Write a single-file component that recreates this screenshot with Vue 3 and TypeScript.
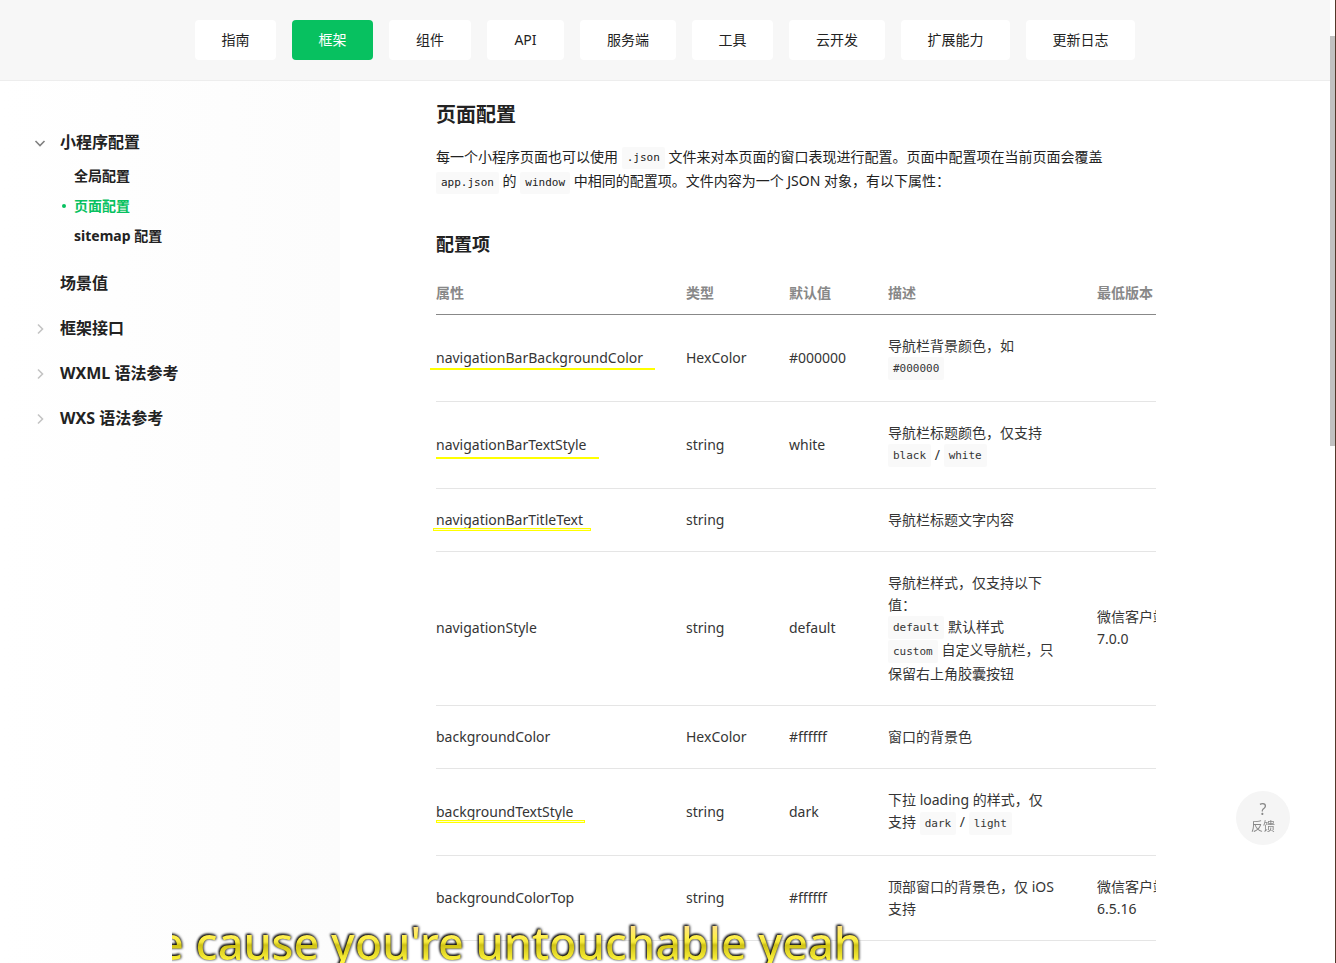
<script setup lang="ts">
interface Tab {
  label: string
  active?: boolean
}

interface Part {
  text: string
  code?: boolean
  breakAfter?: boolean
}

interface Row {
  name: string
  mark?: string
  type: string
  initial: string
  desc: Part[]
  version?: string
}

interface Section {
  label: string
  state: 'open' | 'closed' | 'leaf'
  children?: { label: string; active?: boolean }[]
}

const tabs: Tab[] = [
  { label: '指南' },
  { label: '框架', active: true },
  { label: '组件' },
  { label: 'API' },
  { label: '服务端' },
  { label: '工具' },
  { label: '云开发' },
  { label: '扩展能力' },
  { label: '更新日志' },
]

const sections: Section[] = [
  {
    label: '小程序配置',
    state: 'open',
    children: [
      { label: '全局配置' },
      { label: '页面配置', active: true },
      { label: 'sitemap 配置' },
    ],
  },
  { label: '场景值', state: 'leaf' },
  { label: '框架接口', state: 'closed' },
  { label: 'WXML 语法参考', state: 'closed' },
  { label: 'WXS 语法参考', state: 'closed' },
]

const columns: string[] = ['属性', '类型', '默认值', '描述', '最低版本']

const rows: Row[] = [
  {
    name: 'navigationBarBackgroundColor',
    mark: 'wide',
    type: 'HexColor',
    initial: '#000000',
    desc: [{ text: '导航栏背景颜色，如 ' }, { text: '#000000', code: true }],
  },
  {
    name: 'navigationBarTextStyle',
    mark: 'low',
    type: 'string',
    initial: 'white',
    desc: [
      { text: '导航栏标题颜色，仅支持 ' },
      { text: 'black', code: true },
      { text: ' / ' },
      { text: 'white', code: true },
    ],
  },
  {
    name: 'navigationBarTitleText',
    mark: 'boxed outset',
    type: 'string',
    initial: '',
    desc: [{ text: '导航栏标题文字内容' }],
  },
  {
    name: 'navigationStyle',
    type: 'string',
    initial: 'default',
    desc: [
      { text: '导航栏样式，仅支持以下值：', breakAfter: true },
      { text: 'default', code: true },
      { text: ' 默认样式', breakAfter: true },
      { text: 'custom', code: true },
      { text: ' 自定义导航栏，只保留右上角胶囊按钮' },
    ],
    version: '微信客户端 7.0.0',
  },
  {
    name: 'backgroundColor',
    type: 'HexColor',
    initial: '#ffffff',
    desc: [{ text: '窗口的背景色' }],
  },
  {
    name: 'backgroundTextStyle',
    mark: 'boxed',
    type: 'string',
    initial: 'dark',
    desc: [
      { text: '下拉 loading 的样式，仅支持 ' },
      { text: 'dark', code: true },
      { text: ' / ' },
      { text: 'light', code: true },
    ],
  },
  {
    name: 'backgroundColorTop',
    type: 'string',
    initial: '#ffffff',
    desc: [{ text: '顶部窗口的背景色，仅 iOS 支持' }],
    version: '微信客户端 6.5.16',
  },
]
</script>

<template>
  <div class="page">
    <header class="topbar">
      <nav class="tabs">
        <a
          v-for="tab in tabs"
          :key="tab.label"
          href="#"
          class="tab"
          :class="{ active: tab.active }"
        >{{ tab.label }}</a>
      </nav>
    </header>

    <div class="body">
      <aside class="sidebar">
        <ul class="sections">
          <li v-for="section in sections" :key="section.label">
            <a href="#" class="section">
              <svg v-if="section.state === 'open'" class="arrow open" viewBox="0 0 12 12">
                <path d="M1.5 4 6 8.5 10.5 4" />
              </svg>
              <svg v-else-if="section.state === 'closed'" class="arrow" viewBox="0 0 12 12">
                <path d="M4 1.5 8.5 6 4 10.5" />
              </svg>
              <span v-else class="arrow"></span>
              {{ section.label }}
            </a>
            <ul v-if="section.children" class="children">
              <li v-for="child in section.children" :key="child.label">
                <a href="#" class="child" :class="{ active: child.active }">
                  <span class="dot"></span>{{ child.label }}
                </a>
              </li>
            </ul>
          </li>
        </ul>
      </aside>

      <main class="content">
        <h1>页面配置</h1>
        <p>
          每一个小程序页面也可以使用 <code>.json</code> 文件来对本页面的窗口表现进行配置。页面中配置项在当前页面会覆盖
          <code>app.json</code> 的 <code>window</code> 中相同的配置项。文件内容为一个 JSON 对象，有以下属性：
        </p>
        <h2>配置项</h2>
        <div class="table-wrap">
          <table>
            <colgroup>
              <col class="c-name" />
              <col class="c-type" />
              <col class="c-initial" />
              <col class="c-desc" />
              <col class="c-version" />
            </colgroup>
            <thead>
              <tr>
                <th v-for="column in columns" :key="column" scope="col">{{ column }}</th>
              </tr>
            </thead>
            <tbody>
              <tr v-for="row in rows" :key="row.name">
                <td><span class="name" :class="row.mark ? ['marked', row.mark] : []">{{ row.name }}</span></td>
                <td>{{ row.type }}</td>
                <td>{{ row.initial }}</td>
                <td><template v-for="(part, i) in row.desc" :key="i"><code v-if="part.code">{{ part.text }}</code><template v-else>{{ part.text }}</template><br v-if="part.breakAfter" /></template></td>
                <td>{{ row.version }}</td>
              </tr>
            </tbody>
          </table>
        </div>
      </main>
    </div>

    <button type="button" class="feedback">
      <span class="question">?</span>
      <span>反馈</span>
    </button>

    <div class="scrollbar"><div class="thumb"></div></div>

    <div class="lyrics"><span>e cause you're untouchable yeah</span></div>
  </div>
</template>

<style>
html,
body {
  margin: 0;
  overflow: hidden;
}
</style>

<style scoped>
.page {
  height: 100vh;
  overflow: hidden;
  background: #fff;
  color: #222;
  font-family: "Noto Sans", "Noto Sans CJK SC", sans-serif;
  font-size: 14px;
  line-height: 22px;
}

a {
  color: inherit;
  text-decoration: none;
}

ul {
  list-style: none;
  margin: 0;
  padding: 0;
}

.topbar {
  padding: 20px 6px 20px 0;
  background: #f7f7f7;
  border-bottom: 1px solid #ededed;
}

.tabs {
  display: grid;
  grid-template-columns: 81px 81px 82px 77px 96px 81px 96px 109px 109px;
  gap: 16px;
  justify-content: center;
}

.tab {
  background: #fff;
  border-radius: 4px;
  text-align: center;
  line-height: 40px;
}

.tab.active {
  background: #07c160;
  color: #fff;
}

.body {
  display: flex;
  min-height: 100%;
}

.sidebar {
  box-sizing: border-box;
  flex: 0 0 340px;
  padding: 39px 0 0 34px;
  background: linear-gradient(90deg, #fff, #fcfcfc);
}

.section {
  display: flex;
  align-items: center;
  gap: 14px;
  font-size: 16px;
  font-weight: 700;
  line-height: 45px;
}

.arrow {
  width: 12px;
  height: 12px;
  fill: none;
  stroke: #c4c4c4;
  stroke-width: 1.6;
}

.arrow.open {
  stroke: #808080;
}

.children {
  margin: -4px 0 10px 28px;
}

.child {
  display: flex;
  align-items: center;
  gap: 8px;
  font-weight: 700;
  line-height: 30px;
}

.dot {
  width: 4px;
  height: 4px;
  border-radius: 2px;
}

.active .dot {
  background: #07c160;
}

.child.active {
  color: #07c160;
}

.content {
  flex: 0 1 720px;
  min-width: 0;
  padding-left: 96px;
}

h1 {
  margin: 19px 0 15px;
  font-size: 20px;
  line-height: 30px;
}

p {
  margin: 0 0 36px;
  line-height: 24px;
}

h2 {
  margin: 0 0 24px;
  font-size: 18px;
  line-height: 28px;
}

code {
  display: inline-block;
  padding: 0 5px;
  border-radius: 2px;
  background: #f9f9f9;
  font-family: "DejaVu Sans Mono", monospace;
  font-size: 11px;
  line-height: 23px;
  vertical-align: middle;
}

p code {
  line-height: 22px;
}

.table-wrap {
  margin-left: -6px;
  padding-left: 6px;
  overflow: hidden;
}

table {
  width: 781px;
  table-layout: fixed;
  border-collapse: separate;
  border-spacing: 0;
  color: #353535;
}

.c-name {
  width: 250px;
}

.c-type {
  width: 103px;
}

.c-initial {
  width: 99px;
}

.c-desc {
  width: 209px;
}

.c-version {
  width: 120px;
}

th {
  padding: 0 0 10px;
  border-bottom: 1px solid #888;
  color: #888;
  text-align: left;
}

td {
  padding: 20px 42px 20px 0;
  border-bottom: 1px solid #e5e5e5;
}

td:first-child,
td:nth-child(2),
td:nth-child(3) {
  padding-right: 0;
}

tr:has(code) td {
  height: 46px;
}

.name {
  position: relative;
}

.marked::after {
  content: "";
  position: absolute;
  left: 0;
  right: -12px;
  bottom: -5px;
  height: 2px;
  background: #ff0;
}

.wide::after {
  left: -6px;
  bottom: -3px;
}

.boxed::after {
  box-sizing: border-box;
  bottom: -2px;
  height: 3px;
  border: 1px solid #ff0;
  background: #ffc;
}

.outset::after {
  left: -3px;
  right: -8px;
}

.feedback {
  position: fixed;
  right: 46px;
  bottom: 118px;
  display: flex;
  flex-direction: column;
  align-items: center;
  justify-content: center;
  width: 54px;
  height: 54px;
  padding: 0;
  border: 0;
  border-radius: 50%;
  background: #f5f5f5;
  color: #888;
  font: inherit;
  font-size: 12px;
  line-height: 18px;
}

.question {
  font-size: 16px;
}

.scrollbar {
  position: fixed;
  top: 0;
  right: 0;
  bottom: 0;
  width: 5px;
  padding-top: 36px;
  background: #fff;
  border-right: 1px solid #53392b;
}

.thumb {
  height: 410px;
  background: #c1c1c1;
}

.lyrics {
  position: fixed;
  left: 172px;
  bottom: -10px;
  display: flex;
  justify-content: flex-end;
  width: 690px;
  overflow: hidden;
  font-size: 45px;
  font-weight: 500;
  line-height: 60px;
  white-space: nowrap;
}

.lyrics span {
  background: linear-gradient(#ffe08a 12px, #fff04a 24px, #f5e93c 29px, #cfc214 32px, #fff53e 48px);
  background-clip: text;
  color: transparent;
  filter: drop-shadow(-1px -1px 1px #000) drop-shadow(1px 0 1px #555);
}
</style>
